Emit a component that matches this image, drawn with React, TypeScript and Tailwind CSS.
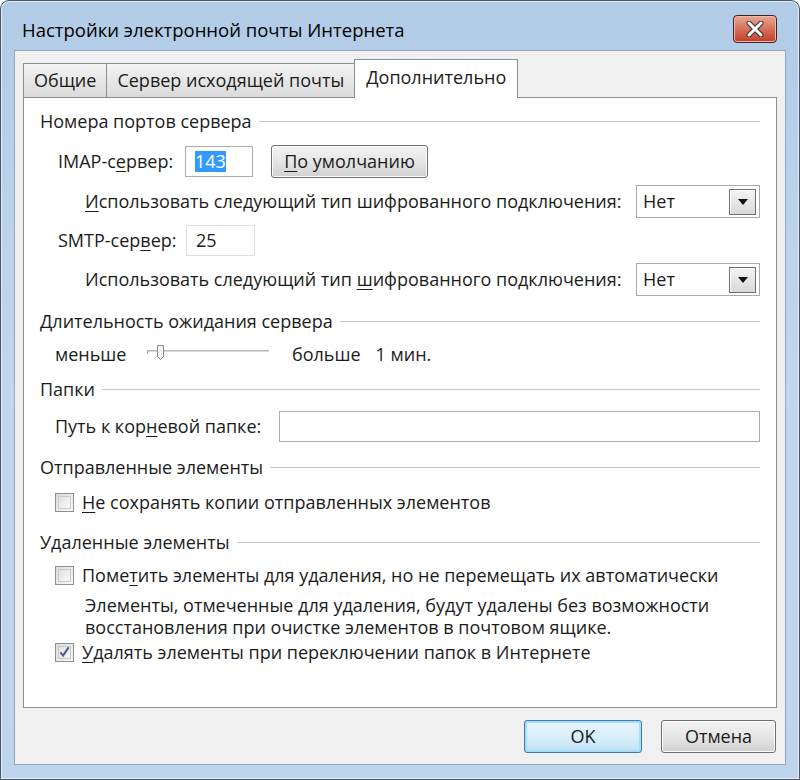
import type { ReactNode } from "react"

const font = { fontFamily: '"Open Sans", "Noto Sans", sans-serif' }

function Section({ title }: { title: ReactNode }) {
  return (
    <div className="flex h-6 items-center gap-[7px]">
      <span className="whitespace-nowrap">{title}</span>
      <div className="flex-1 border-t border-[#c5c5c5] border-b-white" />
    </div>
  )
}

function U({ children }: { children: ReactNode }) {
  return <span className="underline underline-offset-[3px] decoration-1">{children}</span>
}

function Select() {
  return (
    <div className="flex h-[33px] w-[124px] shrink-0 items-center justify-between border border-[#a9a9a9] bg-white pl-[6px] pr-[3px]">
      <span>Нет</span>
      <div className="flex h-[26px] w-[27px] items-center justify-center border border-[#6f6f6f] bg-gradient-to-b from-[#f4f4f4] to-[#d8d8d8] shadow-[inset_1px_1px_0_#ffffff]">
        <svg width="10" height="6" viewBox="0 0 10 6">
          <path d="M0 0h10L5 6z" fill="#111" />
        </svg>
      </div>
    </div>
  )
}

function Checkbox({ checked }: { checked?: boolean }) {
  return (
    <div className="flex h-[19px] w-[19px] shrink-0 items-center justify-center border border-[#8e8f8f] bg-gradient-to-br from-[#dcdcdc] to-[#f8f8f8] p-[2px]">
      <div className="flex h-full w-full items-center justify-center border border-[#c9c9c9] bg-gradient-to-br from-[#e1e1e1] to-[#fafafa]">
        {checked && (
          <svg width="12" height="12" viewBox="0 0 12 12">
            <path d="M1.5 6.5l3 3.5L10.5 1" fill="none" stroke="#4a5a8c" strokeWidth="2.2" />
          </svg>
        )}
      </div>
    </div>
  )
}

function WinButton({ children, primary, w }: { children: ReactNode; primary?: boolean; w: string }) {
  return (
    <div
      className={`flex h-[33px] ${w} items-center justify-center rounded-[3px] border ${
        primary
          ? "border-[#3d7bad] bg-gradient-to-b from-[#e9f5fd] via-[#d9effb] to-[#bfe1f5] shadow-[inset_0_0_0_2px_#a6dcf7]"
          : "border-[#707070] bg-gradient-to-b from-[#f3f3f3] via-[#e6e6e6] to-[#d0d0d0] shadow-[inset_0_0_0_1px_#fcfcfc]"
      }`}
    >
      {children}
    </div>
  )
}

export default function App() {
  return (
    <div className="h-[780px] w-[800px] bg-white text-[18px] text-[#1b1b1b]" style={font}>
      <div className="flex h-full w-full flex-col rounded-t-[9px] border border-[#4a5664] bg-gradient-to-b from-[#b2cbe6] via-[#c2d7ee] to-[#bfd5ec] px-[13px] pb-[14px] shadow-[inset_0_0_0_1px_#e3edf8]">
        {/* Title bar */}
        <div className="flex h-[49px] items-center justify-between pl-[8px] pr-[9px] pt-[8px]">
          <span className="text-[18.5px] text-black">Настройки электронной почты Интернета</span>
          <div className="-mt-[2px] flex h-[28px] w-[44px] items-center justify-center rounded-[4px] border border-[#3a2424] bg-gradient-to-b from-[#e9a793] via-[#d4705a] to-[#c23c24] shadow-[inset_0_0_0_1px_#f0b9a8]">
            <svg width="20" height="16" viewBox="0 0 20 16">
              <path d="M4 2l12 12M16 2L4 14" stroke="#3b2f2f" strokeWidth="5" strokeLinecap="round" />
              <path d="M4 2l12 12M16 2L4 14" stroke="#ffffff" strokeWidth="3" strokeLinecap="round" />
            </svg>
          </div>
        </div>

        {/* Client area */}
        <div className="flex flex-1 flex-col border border-[#8fa7c2] bg-[#f0f0f0] px-[8px] pt-[8px]">
          {/* Tabs */}
          <div className="flex h-[38px] items-end">
            <div className="flex h-[34px] items-center border border-b-0 border-[#8c8e94] bg-gradient-to-b from-[#f3f3f3] to-[#dadada] px-[10px]">
              Общие
            </div>
            <div className="-ml-px flex h-[34px] items-center border border-b-0 border-[#8c8e94] bg-gradient-to-b from-[#f3f3f3] to-[#dadada] px-[10px]">
              Сервер исходящей почты
            </div>
            <div className="relative z-10 -mb-px -ml-px flex h-[39px] items-center border border-b-0 border-[#8c8e94] bg-white px-[11px] pb-[4px]">
              Дополнительно
            </div>
          </div>

          {/* Panel */}
          <div className="flex h-[611px] flex-col border border-[#8c8e94] bg-white px-[16px] pt-[11px]">
            <Section title="Номера портов сервера" />

            <div className="mt-[12px] flex h-[32px] items-center pl-[18px]">
              <span className="w-[127px]">
                IMAP-с<U>е</U>рвер:
              </span>
              <div className="flex h-[31px] w-[68px] items-center border border-[#abadb3] pl-[9px]">
                <span className="bg-[#3399ff] leading-[21px] text-white">143</span>
              </div>
              <div className="ml-[18px]">
                <WinButton w="w-[157px]">
                  <span>
                    <U>П</U>о умолчанию
                  </span>
                </WinButton>
              </div>
            </div>

            <div className="mt-[8px] flex h-[33px] items-center justify-between pl-[45px]">
              <span className="whitespace-nowrap">
                <U>И</U>спользовать следующий тип шифрованного подключения:
              </span>
              <Select />
            </div>

            <div className="mt-[7px] flex h-[31px] items-center pl-[18px]">
              <span className="w-[128px]">
                SMTP-сер<U>в</U>ер:
              </span>
              <div className="flex h-[31px] w-[69px] items-center border border-[#dcdfe6] pl-[9px]">25</div>
            </div>

            <div className="mt-[7px] flex h-[33px] items-center justify-between pl-[45px]">
              <span className="whitespace-nowrap">
                Использовать следующий тип <U>ш</U>ифрованного подключения:
              </span>
              <Select />
            </div>

            <div className="mt-[13px]">
              <Section
                title={
                  <>
                    <U>Д</U>лительность ожидания сервера
                  </>
                }
              />
            </div>

            <div className="mt-[9px] flex h-6 items-center pl-[15px]">
              <span className="w-[92px]">меньше</span>
              <svg width="122" height="20" viewBox="0 0 122 20" className="-mt-[4px]">
                <rect x="0" y="8" width="122" height="2" fill="#d6d6d6" />
                <rect x="0" y="8" width="122" height="1" fill="#b9b9b9" />
                <path d="M0.5 8v4" stroke="#b0b0b0" />
                <path d="M10.5 3.5h6v11l-3 3-3-3z" fill="#f2f2f2" stroke="#8a8a8a" />
              </svg>
              <span className="ml-[23px]">больше</span>
              <span className="ml-[15px]">1 мин.</span>
            </div>

            <div className="mt-[11px]">
              <Section title="Папки" />
            </div>

            <div className="mt-[10px] flex h-[31px] items-center pl-[15px]">
              <span className="w-[224px] whitespace-nowrap">
                Путь к кор<U>н</U>евой папке:
              </span>
              <div className="h-[31px] flex-1 border border-[#abadb3]" />
            </div>

            <div className="mt-[13px]">
              <Section title="Отправленные элементы" />
            </div>

            <div className="mt-[11px] flex h-6 items-center gap-[8px] pl-[15px]">
              <Checkbox />
              <span>
                <U>Н</U>е сохранять копии отправленных элементов
              </span>
            </div>

            <div className="mt-[16px]">
              <Section title="Удаленные элементы" />
            </div>

            <div className="mt-[9px] flex h-6 items-center gap-[8px] pl-[15px]">
              <Checkbox />
              <span className="whitespace-nowrap">
                Поме<U>т</U>ить элементы для удаления, но не перемещать их автоматически
              </span>
            </div>

            <div className="mt-[7px] whitespace-nowrap pl-[45px] leading-[22px]">
              <div>Элементы, отмеченные для удаления, будут удалены без возможности</div>
              <div>восстановления при очистке элементов в почтовом ящике.</div>
            </div>

            <div className="mt-[2px] flex h-6 items-center gap-[8px] pl-[15px]">
              <Checkbox checked />
              <span>
                <U>У</U>далять элементы при переключении папок в Интернете
              </span>
            </div>
          </div>

          {/* Dialog buttons */}
          <div className="flex flex-1 items-center justify-end gap-[19px] pr-[1px]">
            <WinButton primary w="w-[118px]">
              OK
            </WinButton>
            <WinButton w="w-[115px]">Отмена</WinButton>
          </div>
        </div>
      </div>
    </div>
  )
}
